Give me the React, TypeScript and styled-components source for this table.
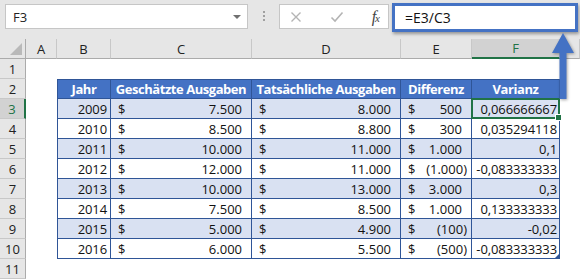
import React from 'react';
import styled, { createGlobalStyle, css } from 'styled-components';

const GlobalStyle = createGlobalStyle`
  html, body {
    margin: 0;
    padding: 0;
    background: #ffffff;
  }
  body {
    width: 580px;
    height: 279px;
    overflow: hidden;
    font-family: "Open Sans", "Liberation Sans", sans-serif;
  }
`;

const green = '#217346';
const tableBlue = '#2f5597';
const headerBlue = '#4472c4';
const band = '#d9e1f2';

const Window = styled.div`
  position: relative;
  display: flex;
  flex-direction: column;
  width: 580px;
  height: 279px;
  overflow: hidden;
`;

/* ---------- formula bar ---------- */

const FormulaBar = styled.div`
  display: flex;
  align-items: flex-start;
  height: 40px;
  padding: 4px 2px 0 5px;
  box-sizing: border-box;
  background: #e6e6e6;
`;

const NameBox = styled.div`
  display: flex;
  align-items: center;
  justify-content: space-between;
  width: 243px;
  height: 25px;
  box-sizing: border-box;
  padding: 0 6px 0 7px;
  background: #ffffff;
  border: 1px solid #c6c6c6;
  font-size: 13px;
  color: #222;
`;

const DropArrow = styled.span`
  width: 0;
  height: 0;
  border-left: 4px solid transparent;
  border-right: 4px solid transparent;
  border-top: 4px solid #707070;
`;

const Grip = styled.div`
  display: flex;
  flex-direction: column;
  align-items: center;
  gap: 2px;
  width: 31px;
  padding-top: 7px;
  box-sizing: border-box;

  span {
    width: 2px;
    height: 2px;
    background: #a0a0a0;
  }
`;

const FxButtons = styled.div`
  display: flex;
  align-items: center;
  justify-content: space-between;
  width: 110px;
  height: 25px;
  box-sizing: border-box;
  padding: 0 9px 0 10px;
  background: #ffffff;
  border: 1px solid #c6c6c6;
`;

const FxLabel = styled.span`
  font-family: "Liberation Serif", serif;
  font-style: italic;
  font-size: 16px;
  line-height: 1;
  color: #444;
  letter-spacing: -1px;

  sub {
    font-size: 11px;
    vertical-align: baseline;
  }
`;

const FormulaInput = styled.div`
  flex: 1;
  display: flex;
  align-items: center;
  height: 29px;
  margin: -1px 0 0 3px;
  box-sizing: border-box;
  padding-left: 10px;
  background: #ffffff;
  border: 3px solid ${headerBlue};
  box-shadow: 1px 2px 3px rgba(0, 0, 0, 0.35);
  font-size: 14px;
  color: #111;
`;

/* ---------- sheet ---------- */

const Sheet = styled.div`
  display: grid;
  grid-template-columns: 26px 31px 54px 141px 149px 71px 88px 1fr;
  grid-auto-rows: 20px;
  font-size: 13px;
  color: #111;
`;

const ColHead = styled.div<{ $active?: boolean }>`
  display: flex;
  align-items: center;
  justify-content: center;
  background: ${p => (p.$active ? '#d2d2d2' : '#e6e6e6')};
  border-right: 1px solid #c8c8c8;
  border-bottom: ${p => (p.$active ? `2px solid ${green}` : '1px solid #ababab')};
  box-sizing: border-box;
  color: ${p => (p.$active ? green : '#222')};
  font-size: 13px;
`;

const Corner = styled.div`
  position: relative;
  background: #e6e6e6;
  border-right: 1px solid #ababab;
  border-bottom: 1px solid #ababab;
  box-sizing: border-box;

  &::after {
    content: '';
    position: absolute;
    right: 3px;
    bottom: 3px;
    width: 0;
    height: 0;
    border-left: 12px solid transparent;
    border-bottom: 12px solid #b9b9b9;
  }
`;

const RowHead = styled.div<{ $active?: boolean }>`
  display: flex;
  align-items: center;
  justify-content: center;
  background: ${p => (p.$active ? '#d2d2d2' : '#e6e6e6')};
  border-right: ${p => (p.$active ? `2px solid ${green}` : '1px solid #ababab')};
  border-bottom: 1px solid #c8c8c8;
  box-sizing: border-box;
  color: ${p => (p.$active ? green : '#222')};
`;

const Blank = styled.div`
  background: #ffffff;
`;

const Cell = styled.div<{
  $head?: boolean;
  $band?: boolean;
  $first?: boolean;
  $top?: boolean;
  $align?: 'left' | 'right' | 'center';
  $pad?: number;
  $selected?: boolean;
}>`
  position: relative;
  display: flex;
  align-items: center;
  justify-content: ${p =>
    p.$align === 'left' ? 'flex-start' : p.$align === 'center' ? 'center' : 'flex-end'};
  padding: 0 ${p => p.$pad ?? 3}px 0 4px;
  box-sizing: border-box;
  white-space: nowrap;
  background: ${p => (p.$head ? headerBlue : p.$band ? band : '#ffffff')};
  color: ${p => (p.$head ? '#ffffff' : '#111')};
  font-weight: ${p => (p.$head ? 700 : 400)};
  letter-spacing: ${p => (p.$head ? '-0.45px' : '-0.1px')};
  border-right: 1px solid ${tableBlue};
  border-bottom: 1px solid ${tableBlue};
  ${p => p.$first && css`border-left: 1px solid ${tableBlue};`}
  ${p => p.$top && css`border-top: 1px solid ${tableBlue};`}
  ${p =>
    p.$selected &&
    css`
      &::after {
        content: '';
        position: absolute;
        left: -1px;
        top: -1px;
        right: -1px;
        bottom: -1px;
        border: 2px solid ${green};
      }
      &::before {
        content: '';
        position: absolute;
        right: -3px;
        bottom: -3px;
        width: 5px;
        height: 5px;
        background: ${green};
        border: 1px solid #fff;
        z-index: 2;
      }
    `}
`;

const Money = styled.div<{ $band?: boolean; $neg?: boolean }>`
  display: flex;
  align-items: center;
  justify-content: space-between;
  padding: 0 ${p => (p.$neg ? 4 : 9)}px 0 7px;
  box-sizing: border-box;
  white-space: nowrap;
  background: ${p => (p.$band ? band : '#ffffff')};
  border-right: 1px solid ${tableBlue};
  border-bottom: 1px solid ${tableBlue};
`;

const ResizeMark = styled.span`
  position: absolute;
  right: 0;
  bottom: 0;
  width: 0;
  height: 0;
  border-left: 4px solid transparent;
  border-bottom: 4px solid ${tableBlue};
`;

const Arrow = styled.svg`
  position: absolute;
  left: 551px;
  top: 32px;
  filter: drop-shadow(1px 1px 1.5px rgba(0, 0, 0, 0.35));
`;

/* ---------- data ---------- */

interface Row {
  year: string;
  est: string;
  act: string;
  diff: string;
  varianz: string;
}

const rows: Row[] = [
  { year: '2009', est: '7.500', act: '8.000', diff: '500', varianz: '0,066666667' },
  { year: '2010', est: '8.500', act: '8.800', diff: '300', varianz: '0,035294118' },
  { year: '2011', est: '10.000', act: '11.000', diff: '1.000', varianz: '0,1' },
  { year: '2012', est: '12.000', act: '11.000', diff: '(1.000)', varianz: '-0,083333333' },
  { year: '2013', est: '10.000', act: '13.000', diff: '3.000', varianz: '0,3' },
  { year: '2014', est: '7.500', act: '8.500', diff: '1.000', varianz: '0,133333333' },
  { year: '2015', est: '5.000', act: '4.900', diff: '(100)', varianz: '-0,02' },
  { year: '2016', est: '6.000', act: '5.500', diff: '(500)', varianz: '-0,083333333' },
];

const colLetters = ['A', 'B', 'C', 'D', 'E', 'F', ''];
const headers = ['Jahr', 'Geschätzte Ausgaben', 'Tatsächliche Ausgaben', 'Differenz', 'Varianz'];

function App() {
  return (
    <>
      <GlobalStyle />
      <Window>
        <FormulaBar>
          <NameBox>
            <span>F3</span>
            <DropArrow />
          </NameBox>
          <Grip>
            <span />
            <span />
            <span />
          </Grip>
          <FxButtons>
            <svg width="12" height="12" viewBox="0 0 12 12">
              <path d="M1.5 1.5 L10.5 10.5 M10.5 1.5 L1.5 10.5" stroke="#b4b4b4" strokeWidth="1.4" />
            </svg>
            <svg width="14" height="12" viewBox="0 0 14 12">
              <path d="M1.5 6.5 L5 10 L12.5 1.5" stroke="#b4b4b4" strokeWidth="1.6" fill="none" />
            </svg>
            <FxLabel>
              f<sub>x</sub>
            </FxLabel>
          </FxButtons>
          <FormulaInput>=E3/C3</FormulaInput>
        </FormulaBar>

        <Sheet>
          <Corner />
          {colLetters.map((c, i) => (
            <ColHead key={i} $active={c === 'F'}>
              {c}
            </ColHead>
          ))}

          <RowHead>1</RowHead>
          {colLetters.map((_, i) => (
            <Blank key={i} />
          ))}

          <RowHead>2</RowHead>
          <Blank />
          {headers.map((h, i) => (
            <Cell key={h} $head $top $first={i === 0} $align="center" $pad={4}>
              {h}
            </Cell>
          ))}
          <Blank />

          {rows.map((r, idx) => {
            const banded = idx % 2 === 0;
            const rowNum = idx + 3;
            const last = idx === rows.length - 1;
            return (
              <React.Fragment key={r.year}>
                <RowHead $active={rowNum === 3}>{rowNum}</RowHead>
                <Blank />
                <Cell $band={banded} $first>
                  {r.year}
                </Cell>
                <Money $band={banded}>
                  <span>$</span>
                  <span>{r.est}</span>
                </Money>
                <Money $band={banded}>
                  <span>$</span>
                  <span>{r.act}</span>
                </Money>
                <Money $band={banded} $neg={r.diff.startsWith('(')}>
                  <span>$</span>
                  <span>{r.diff}</span>
                </Money>
                <Cell $band={banded} $pad={2} $selected={rowNum === 3}>
                  {r.varianz}
                  {last && <ResizeMark />}
                </Cell>
                <Blank />
              </React.Fragment>
            );
          })}

          <RowHead>11</RowHead>
          {colLetters.map((_, i) => (
            <Blank key={i} />
          ))}
        </Sheet>

        <Arrow width="24" height="68" viewBox="0 0 24 68">
          <path d="M12 1 L23 21 L15.5 21 L15.5 67 L8.5 67 L8.5 21 L1 21 Z" fill={headerBlue} />
        </Arrow>
      </Window>
    </>
  );
}

export default App;
